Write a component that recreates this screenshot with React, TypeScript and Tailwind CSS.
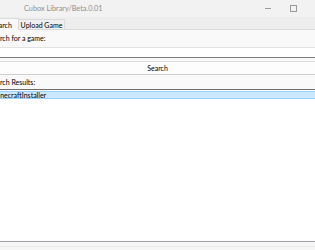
import React from "react";

export default function App() {
  return (
    <div
      className="w-[315px] h-[250px] overflow-hidden bg-[#f9f9f9] flex flex-col text-[7px] leading-none text-black"
      style={{ fontFamily: 'Lato, "Noto Sans", sans-serif' }}
    >
      {/* Title bar */}
      <div className="h-[17px] shrink-0 bg-[#f2f2f2] flex items-center">
        <span className="ml-[24px] text-[#8f8f8f] text-[7.3px]">Cubox Library/Beta.0.01</span>
        <div className="ml-auto flex items-center gap-[19px] mr-[18px]">
          <div className="w-[6px] h-px bg-[#9a9a9a]" />
          <div className="w-[7px] h-[7px] border border-[#9a9a9a]" />
        </div>
      </div>
      {/* Tab strip */}
      <div className="h-[13px] shrink-0 bg-[#eeeeee] flex items-end border-b border-[#dadada]">
        <div className="h-[12px] -ml-[16px] w-[35px] shrink-0 bg-[#f9f9f9] border border-b-0 border-[#dadada] flex items-center justify-center relative top-px z-10 pt-px">
          Search
        </div>
        <div className="h-[10px] w-[46px] shrink-0 bg-[#f0f0f0] border border-b-0 border-l-0 border-[#dadada] flex items-center justify-center pt-px">
          Upload Game
        </div>
      </div>
      {/* Content */}
      <div className="flex-1 flex flex-col bg-[#f9f9f9]">
        <div className="h-[17px] shrink-0 flex items-center -ml-[11px]">Search for a game:</div>
        <div className="h-[11px] shrink-0 bg-white border-t border-[#e2e2e2] border-b border-b-[#7a7a7a]" />
        <div className="h-[3px] shrink-0" />
        <div className="h-[14px] shrink-0 bg-[#fdfdfd] border-t border-[#dcdcdc] border-b border-b-[#cfcfcf] flex items-center justify-center">
          Search
        </div>
        <div className="h-[14px] shrink-0 flex items-center -ml-[11px]">Search Results:</div>
        <div className="flex-1 bg-white border-t border-[#6e6e6e] pt-px">
          <div className="h-[8px] bg-[#cce8ff] border-y border-[#99d1ff] flex items-center">
            <span className="-ml-[8px]">MinecraftInstaller</span>
          </div>
        </div>
        <div className="h-[9px] shrink-0 bg-[#f6f6f6] border-t border-[#a0a0a8]">
          <div className="h-[5px] border-b border-[#ebebeb]" />
        </div>
      </div>
    </div>
  );
}
